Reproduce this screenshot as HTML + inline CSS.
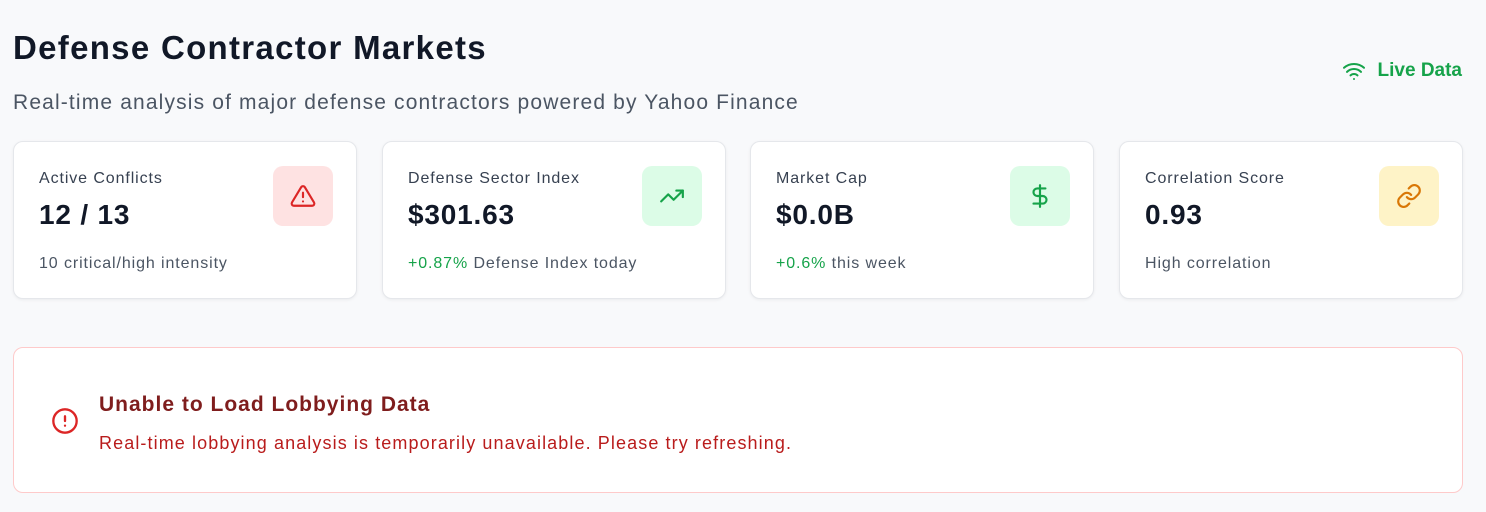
<!DOCTYPE html>
<html><head><style>
*{box-sizing:border-box;margin:0;padding:0}
body{width:1486px;height:512px;background:#f8f9fb;font-family:"Liberation Sans",sans-serif;position:relative;overflow:hidden;color:#111827}
h1{position:absolute;left:13px;top:29px;font-size:33px;font-weight:700;color:#111827;letter-spacing:1.3px}
.sub{position:absolute;left:13px;top:91px;font-size:21px;color:#4b5563;letter-spacing:1.15px}
.live{position:absolute;right:24px;top:59px;font-size:19px;font-weight:700;color:#16a34a;display:flex;align-items:center;gap:12px}
.card{position:absolute;top:141px;width:344px;height:158px;background:#fff;border:1px solid #e5e7eb;border-radius:10px;box-shadow:0 1px 3px rgba(0,0,0,.06)}
.lbl{position:absolute;left:25px;top:28px;font-size:16px;color:#374151;letter-spacing:0.9px}
.val{position:absolute;left:25px;top:57px;font-size:28px;font-weight:700;color:#111827;letter-spacing:0.8px}
.foot{position:absolute;left:25px;top:113px;font-size:16px;color:#4b5563;letter-spacing:0.9px}
.g{color:#16a34a}
.ic{position:absolute;left:259px;top:24px;width:60px;height:60px;border-radius:10px;display:flex;align-items:center;justify-content:center}
.err{position:absolute;left:13px;top:347px;width:1450px;height:146px;background:#fff;border:1px solid #fecaca;border-radius:10px}
.et{position:absolute;left:85px;top:45px;font-size:21px;font-weight:700;color:#7f1d1d;letter-spacing:1px}
.ed{position:absolute;left:85px;top:85px;font-size:18px;color:#b91c1c;letter-spacing:1.1px}
</style></head><body>
<h1>Defense Contractor Markets</h1>
<div class="sub">Real-time analysis of major defense contractors powered by Yahoo Finance</div>
<div class="live"><svg width="24" height="24" viewBox="0 0 24 24" fill="none" stroke="#16a34a" stroke-width="2" stroke-linecap="round"><path d="M2 8.8a15 15 0 0 1 20 0"/><path d="M5 12.9a10 10 0 0 1 14 0"/><path d="M8.5 16.4a5 5 0 0 1 7 0"/><path d="M12 20h.01"/></svg>Live Data</div>

<div class="card" style="left:13px"><div class="lbl">Active Conflicts</div><div class="val">12 / 13</div><div class="foot">10 critical/high intensity</div>
<div class="ic" style="background:#fee2e2"><svg width="26" height="26" viewBox="0 0 24 24" fill="none" stroke="#dc2626" stroke-width="2" stroke-linecap="round" stroke-linejoin="round"><path d="M10.3 3.9 1.8 18a2 2 0 0 0 1.7 3h17a2 2 0 0 0 1.7-3L13.7 3.9a2 2 0 0 0-3.4 0z"/><path d="M12 9v4M12 17h.01"/></svg></div></div>

<div class="card" style="left:382px"><div class="lbl">Defense Sector Index</div><div class="val">$301.63</div><div class="foot"><span class="g">+0.87%</span> Defense Index today</div>
<div class="ic" style="background:#dcfce7"><svg width="26" height="26" viewBox="0 0 24 24" fill="none" stroke="#16a34a" stroke-width="2" stroke-linecap="round" stroke-linejoin="round"><path d="M22 7 13.5 15.5 8.5 10.5 2 17"/><path d="M16 7h6v6"/></svg></div></div>

<div class="card" style="left:750px"><div class="lbl">Market Cap</div><div class="val">$0.0B</div><div class="foot"><span class="g">+0.6%</span> this week</div>
<div class="ic" style="background:#dcfce7"><svg width="26" height="26" viewBox="0 0 24 24" fill="none" stroke="#16a34a" stroke-width="2" stroke-linecap="round" stroke-linejoin="round"><path d="M12 2v20"/><path d="M17 5H9.5a3.5 3.5 0 0 0 0 7h5a3.5 3.5 0 0 1 0 7H6"/></svg></div></div>

<div class="card" style="left:1119px"><div class="lbl">Correlation Score</div><div class="val">0.93</div><div class="foot">High correlation</div>
<div class="ic" style="background:#fef3c7"><svg width="26" height="26" viewBox="0 0 24 24" fill="none" stroke="#d97706" stroke-width="2" stroke-linecap="round" stroke-linejoin="round"><path d="M10 13a5 5 0 0 0 7.5.5l3-3a5 5 0 0 0-7.1-7.1l-1.7 1.7"/><path d="M14 11a5 5 0 0 0-7.5-.5l-3 3a5 5 0 0 0 7.1 7.1l1.7-1.7"/></svg></div></div>

<div class="err">
<svg style="position:absolute;left:37px;top:59px" width="28" height="28" viewBox="0 0 24 24" fill="none" stroke="#dc2626" stroke-width="2" stroke-linecap="round"><circle cx="12" cy="12" r="10"/><path d="M12 8v4M12 16h.01"/></svg>
<div class="et">Unable to Load Lobbying Data</div>
<div class="ed">Real-time lobbying analysis is temporarily unavailable. Please try refreshing.</div>
</div>
</body></html>
